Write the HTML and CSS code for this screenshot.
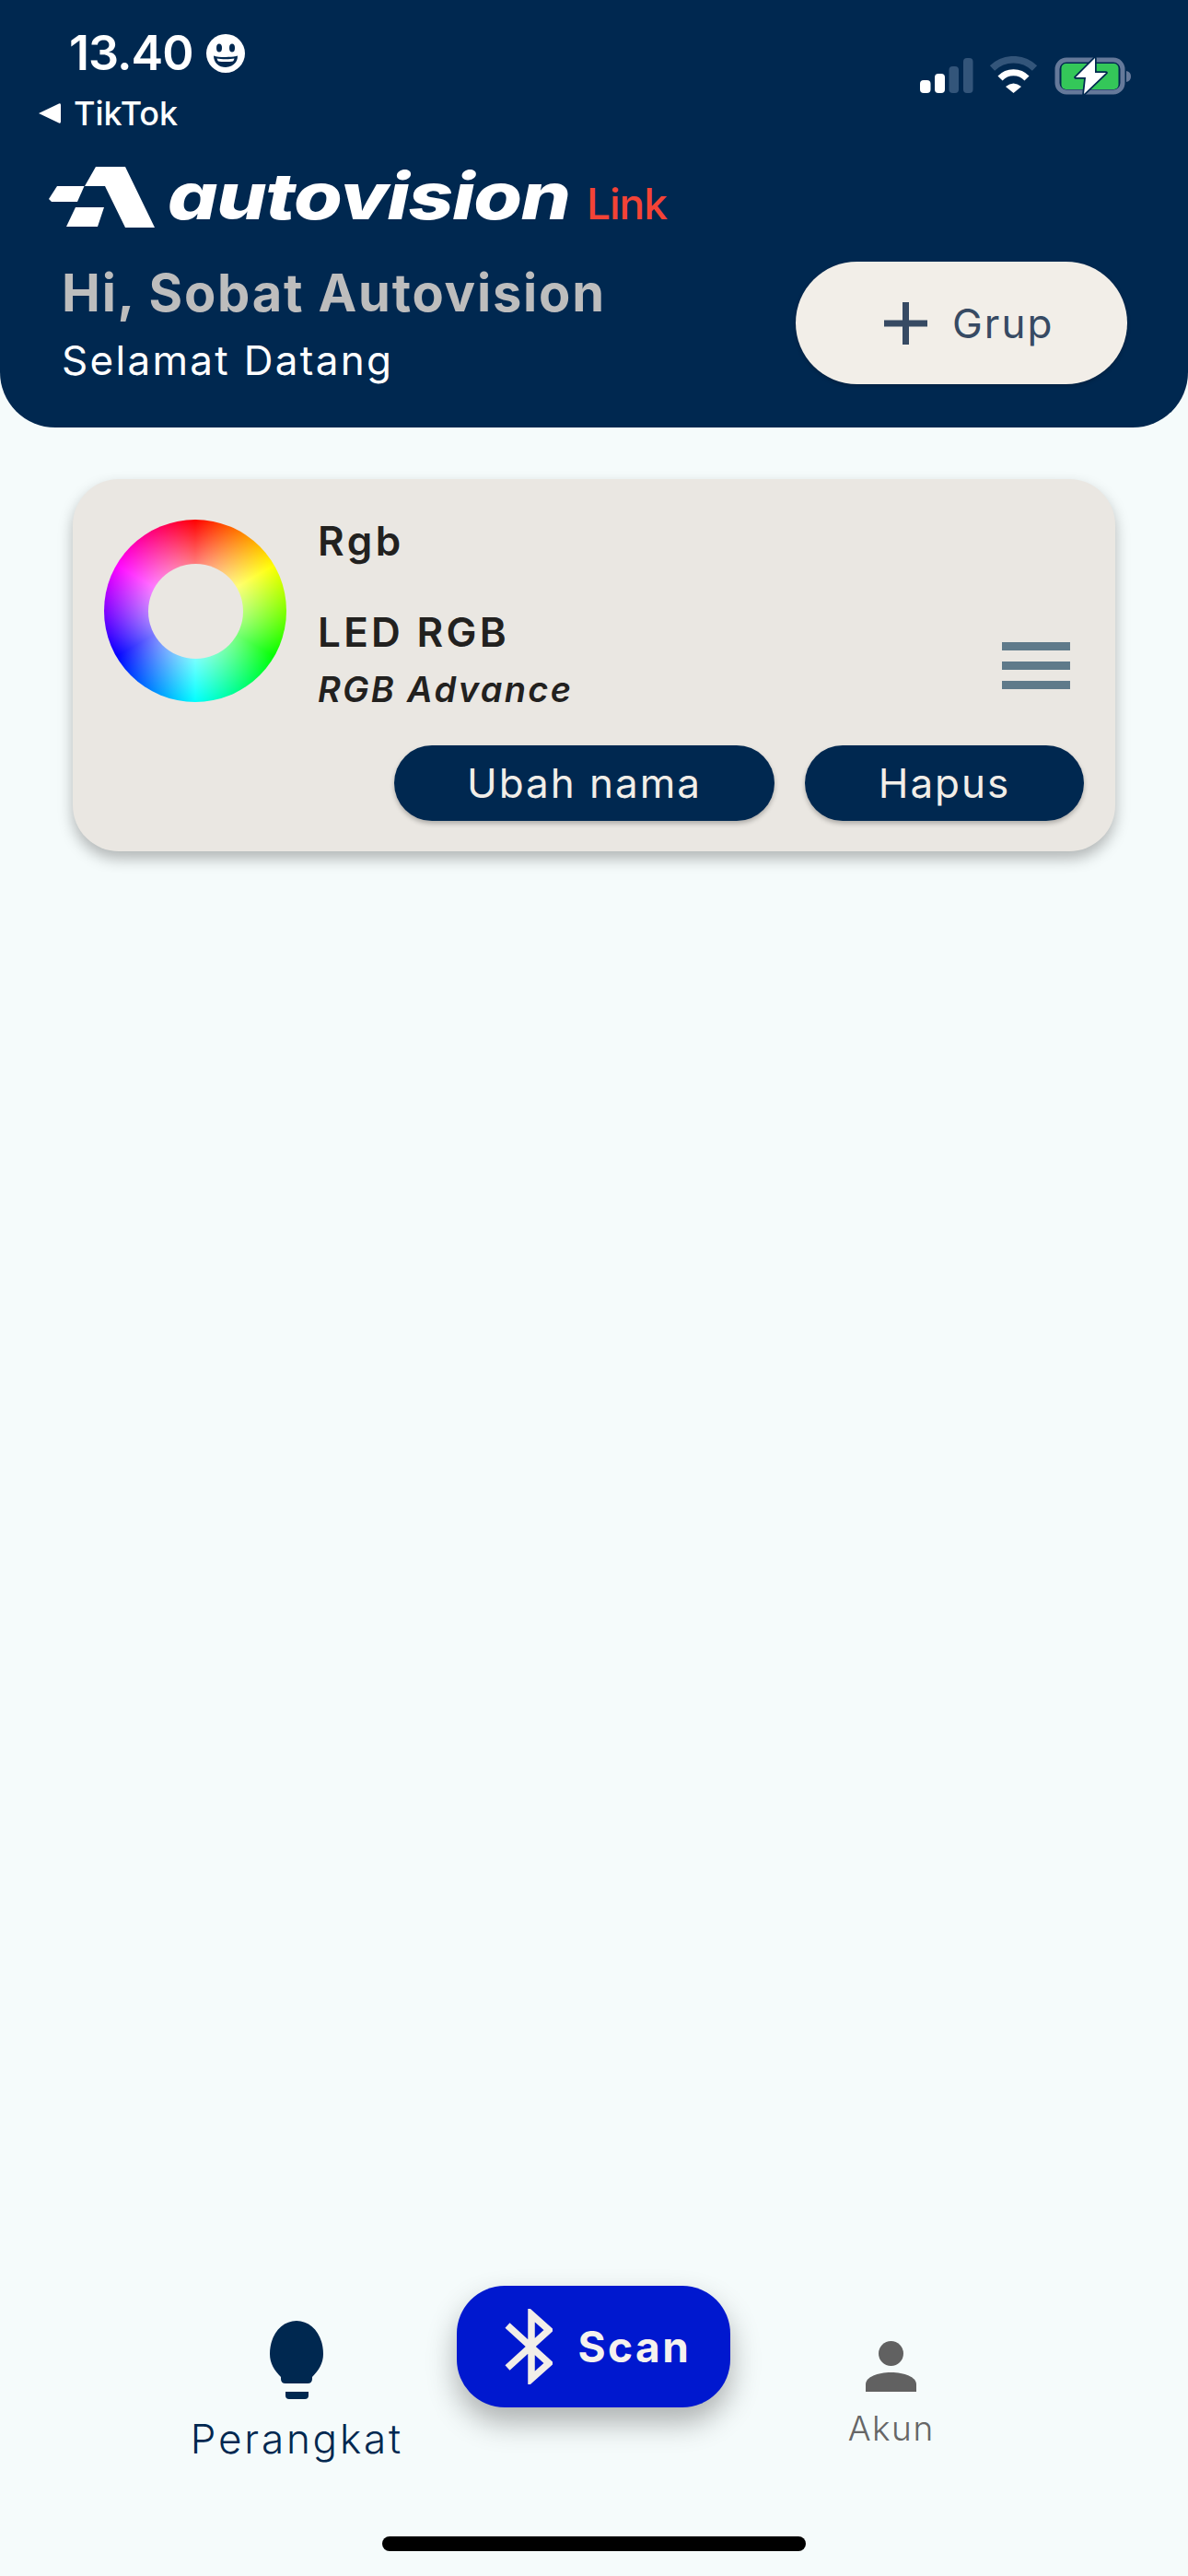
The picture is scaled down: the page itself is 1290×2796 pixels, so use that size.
FILE: index.html
```html
<!DOCTYPE html>
<html lang="id">
<head>
<meta charset="utf-8">
<title>Autovision Link</title>
<link rel="stylesheet" href="styles.css">
</head>
<body>
<div class="app">
  <header class="header">
    <div class="status">
      <div class="status-left">
        <div class="time-row">
          <span class="time">13.40</span>
          <svg class="emoji" viewBox="0 0 42 42"><circle cx="21" cy="21" r="21" fill="#fff"/><ellipse cx="14" cy="15" rx="3" ry="4.500" fill="#002850"/><ellipse cx="28" cy="15" rx="3" ry="4.500" fill="#002850"/><path d="M8 23.500C13 25.500 29 25.500 34 23.500C34 31.500 28 36 21 36C14 36 8 31.500 8 23.500Z" fill="#002850"/><path d="M11.500 26.500C16 27.500 26 27.500 30.500 26.500C30 28 29.500 29 29 29.500C25 30.300 17 30.300 13 29.500C12.500 29 12 28 11.500 26.500Z" fill="#fff"/></svg>
        </div>
        <div class="back-row">
          <svg class="back" viewBox="0 0 24 22"><path d="M0 11L22 0.500Q24 -0.500 24 2V20Q24 22.500 22 21.500Z" fill="#fff"/></svg>
          <span class="back-label">TikTok</span>
        </div>
      </div>
      <div class="status-right">
        <svg class="signal" viewBox="0 0 58 39"><rect x="0" y="25" width="11.500" height="14" rx="4" fill="#fff"/><rect x="16" y="18" width="11" height="21" rx="4" fill="#fff"/><rect x="31.500" y="10" width="10.500" height="29" rx="4" fill="#33557a"/><rect x="47" y="1" width="10.500" height="38" rx="4" fill="#33557a"/></svg>
        <svg class="wifi" viewBox="0 0 53 40"><path d="M3.500 13A33 33 0 0 1 49.500 13" fill="none" stroke="#33557a" stroke-width="7.500"/><path d="M12 24A20 20 0 0 1 41 24" fill="none" stroke="#fff" stroke-width="7"/><path d="M18 33Q26.500 26 35 33L26.500 40Z" fill="#fff"/></svg>
        <svg class="battery" viewBox="0 0 84 42"><rect x="3" y="4" width="71" height="35" rx="10" fill="none" stroke="#65799a" stroke-width="5"/><rect x="7.500" y="8" width="62" height="28" rx="5" fill="#34c759"/><path d="M78 16Q83 17 83 22Q83 27 78 28Z" fill="#65799a"/><path d="M44 2L23 23H34L32 41L56 18H44Z" fill="#fff" stroke="#002850" stroke-width="3.500" stroke-linejoin="round" paint-order="stroke"/></svg>
      </div>
    </div>
    <div class="brand">
      <svg class="mark" viewBox="0 0 115 67"><path d="M51 1H83L115 67H83L61 22H39Z" fill="#fff"/><path d="M9 22H38.500L31 39H3L0 36Z" fill="#fff"/><path d="M29 45H60L53 66H19Z" fill="#fff"/></svg>
      <span class="word">autovision</span>
      <span class="link">Link</span>
    </div>
    <div class="greet-row">
      <div class="greet">
        <div class="hi">Hi, Sobat Autovision</div>
        <div class="welcome">Selamat Datang</div>
      </div>
      <div class="group-btn">
        <svg class="plus" viewBox="0 0 47 46"><path d="M0 23H47M23.500 0V46" stroke="#374a63" stroke-width="7" fill="none"/></svg>
        <span>Grup</span>
      </div>
    </div>
  </header>

  <main class="content">
    <section class="card">
      <div class="card-top">
        <div class="ring"><div class="hole"></div></div>
        <div class="info">
          <div class="name">Rgb</div>
          <div class="type">LED RGB</div>
          <div class="model">RGB Advance</div>
        </div>
        <div class="menu"><span class="menu-bar"></span><span class="menu-bar"></span><span class="menu-bar"></span></div>
      </div>
      <div class="actions">
        <div class="pill pill-rename">Ubah nama</div>
        <div class="pill pill-delete">Hapus</div>
      </div>
    </section>
  </main>

  <footer class="footer">
    <nav class="nav">
      <div class="tab tab-device">
        <svg class="bulb" viewBox="0 0 58 85"><path d="M29 0C45 0 58 15 58 36C58 46 53 54 46 61V63Q46 68 41 68H17Q12 68 12 63V61C5 54 0 46 0 36C0 15 13 0 29 0Z" fill="#002850"/><path d="M17 77H42V81Q42 85 38 85H21Q17 85 17 81Z" fill="#002850"/></svg>
        <span class="tab-label">Perangkat</span>
      </div>
      <div class="tab">
        <div class="scan">
          <svg class="bt" viewBox="0 0 52 82"><path d="M3 18L48 59L29 76V6L48 23L3 64" fill="none" stroke="#f2eee8" stroke-width="7.500"/></svg>
          <span class="scan-label">Scan</span>
        </div>
      </div>
      <div class="tab tab-account">
        <svg class="person" viewBox="0 0 55 55"><circle cx="27.500" cy="13.500" r="13.500" fill="#616161"/><path d="M0 55V47C0 39 13 34 27.500 34C42 34 55 39 55 47V55Z" fill="#616161"/></svg>
        <span class="akun-label">Akun</span>
      </div>
    </nav>
    <div class="home-bar"></div>
  </footer>
</div>
</body>
</html>
```
FILE: styles.css
```css
* { box-sizing: border-box; }
html, body { margin: 0; padding: 0; }
body { font-family: Inter, "Liberation Sans", sans-serif; background: #f5fbfb; }
.app { width: 1290px; height: 2796px; display: flex; flex-direction: column; overflow: hidden; }

.header { height: 464px; background: #002850; border-radius: 0 0 60px 60px; padding-top: 36px; color: #fff; flex: none; }
.status { display: flex; justify-content: space-between; align-items: flex-start; }
.status-left { padding-left: 42px; }
.time-row { display: flex; align-items: center; height: 44px; padding-left: 33px; gap: 15px; }
.time { font-size: 52px; line-height: 44px; font-weight: 600; letter-spacing: -1px; }
.emoji { width: 42px; height: 42px; }
.back-row { display: flex; align-items: center; gap: 14px; height: 40px; margin-top: 23px; }
.back { width: 24px; height: 22px; }
.back-label { font-size: 36px; line-height: 40px; font-weight: 500; }
.status-right { display: flex; align-items: flex-start; padding: 25px 61px 0 0; }
.signal { width: 58px; height: 39px; margin-right: 17px; margin-top: 1px; }
.wifi { width: 53px; height: 40px; margin-right: 18px; }
.battery { width: 84px; height: 42px; }

.brand { display: flex; align-items: flex-end; height: 67px; margin-top: 37px; padding-left: 53px; }
.mark { width: 115px; height: 67px; flex: none; }
.word { width: 455px; margin-left: 14px; margin-bottom: 4.500px; font-size: 70px; line-height: 60px; font-weight: 800; font-style: italic; letter-spacing: -1px; transform: scaleX(1.22); transform-origin: left center; }
.link { font-size: 46px; line-height: 60px; font-weight: 500; letter-spacing: -1px; color: #f44336; margin-bottom: -4px; }

.greet-row { display: flex; justify-content: space-between; align-items: flex-start; margin-top: 37px; padding: 0 66px 0 67px; }
.greet { padding-top: 4px; }
.hi { font-size: 56px; line-height: 60px; font-weight: 700; color: #bdbdbd; letter-spacing: 1.800px; }
.welcome { font-size: 44px; line-height: 50px; margin-top: 18px; font-weight: 400; letter-spacing: 2.300px; }
.group-btn { width: 360px; height: 133px; border-radius: 67px; background: #f2eee8; display: flex; align-items: center; padding-left: 96px; gap: 27px; color: #374a63; font-size: 44px; line-height: 50px; letter-spacing: 2px; box-shadow: 0 2px 4px rgba(0,0,0,.2); }
.plus { width: 47px; height: 46px; }

.content { flex: 1; padding: 56px 79px 0; }
.card { height: 404px; background: #eae7e2; border-radius: 50px; padding-top: 44px; box-shadow: 0 8px 16px rgba(0,0,0,.28); }
.card-top { display: flex; align-items: flex-start; padding-left: 34px; }
.ring { width: 198px; height: 198px; border-radius: 50%; flex: none; display: flex; align-items: center; justify-content: center; background: radial-gradient(closest-side, #fff, rgba(255,255,255,0)), conic-gradient(#f00, #ff0, #0f0, #0ff, #00f, #f0f, #f00); }
.hole { width: 103px; height: 103px; border-radius: 50%; background: #eae7e2; }
.info { margin-left: 34px; color: #22211f; }
.name { font-size: 44px; line-height: 46px; font-weight: 600; letter-spacing: 3.500px; }
.type { font-size: 44px; line-height: 46px; font-weight: 600; margin-top: 53px; letter-spacing: 3.300px; }
.model { font-size: 38px; line-height: 40px; font-weight: 600; font-style: italic; margin-top: 19px; letter-spacing: 2.300px; }
.menu { margin: 133px 49px 0 auto; width: 74px; display: flex; flex-direction: column; gap: 12.500px; }
.menu-bar { display: block; height: 8.500px; background: #5f7a8a; }
.actions { display: flex; justify-content: flex-end; gap: 33px; padding-right: 34px; margin-top: 41px; }
.pill { height: 82px; border-radius: 41px; background: #002850; color: #f2eee8; font-size: 44px; line-height: 82px; text-align: center; letter-spacing: 2px; box-shadow: 0 3px 5px rgba(0,0,0,.25); }
.pill-rename { width: 413px; }
.pill-delete { width: 303px; }

.footer { flex: none; height: 315px; }
.nav { display: grid; grid-template-columns: repeat(3, 1fr); height: 272px; padding: 0 161px; }
.tab { display: flex; flex-direction: column; align-items: center; }
.tab-device { padding-top: 38px; }
.tab-account { padding-top: 60px; }
.bulb { width: 58px; height: 85px; }
.tab-label { font-size: 44px; line-height: 50px; margin-top: 18px; font-weight: 350; color: #002850; letter-spacing: 2.800px; }
.person { width: 55px; height: 55px; }
.akun-label { font-size: 37px; line-height: 40px; margin-top: 20px; font-weight: 350; color: #666; letter-spacing: 1.500px; }
.scan { width: 297px; height: 132px; border-radius: 52px; background: #0018cf; display: flex; align-items: center; padding-left: 52px; gap: 27px; box-shadow: 0 16px 32px rgba(0,0,0,.3); }
.bt { width: 52px; height: 82px; flex: none; }
.scan-label { font-size: 46px; line-height: 50px; font-weight: 700; color: #f5f2ee; letter-spacing: 2.500px; }
.home-bar { width: 460px; height: 16px; border-radius: 8px; background: #000; margin-left: 415px; }
```
